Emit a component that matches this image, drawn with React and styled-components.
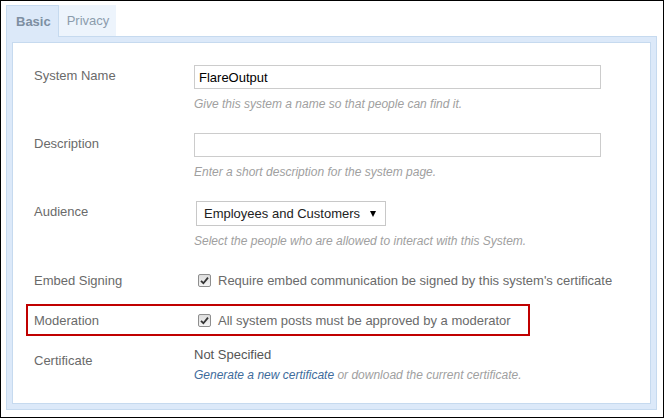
import React from "react";
import styled, { createGlobalStyle } from "styled-components";

const GlobalStyle = createGlobalStyle`
  html, body {
    margin: 0;
    padding: 0;
    background: #fff;
    font-family: "Liberation Sans", Arial, sans-serif;
  }
`;

const Screen = styled.div`
  width: 664px;
  height: 418px;
  box-sizing: border-box;
  border: 1px solid #000;
  background: #fff;
  padding: 4px 6px 7px 5px;
  display: flex;
  flex-direction: column;
`;

const Tabs = styled.div`
  display: flex;
  height: 31px;
`;

const Tab = styled.div`
  position: relative;
  z-index: 1;
  display: flex;
  align-items: center;
  height: ${(p) => (p.$active ? "32px" : "31px")};
  box-sizing: border-box;
  padding: ${(p) => (p.$active ? "0 7px 0 9px" : "0 7px 0 8px")};
  background: ${(p) => (p.$active ? "#dce9f9" : "#edf4fc")};
  border: ${(p) => (p.$active ? "1px solid #c6daef" : "none")};
  border-bottom: none;
  color: ${(p) => (p.$active ? "#7d8fa2" : "#8c9cad")};
  font-size: 13px;
  font-weight: ${(p) => (p.$active ? "bold" : "normal")};
`;

const Frame = styled.div`
  flex: 1;
  border: 1px solid #c6daef;
  background: #dce9f9;
  padding: 5px;
  display: flex;
`;

const Panel = styled.div`
  flex: 1;
  border: 1px solid #c6daef;
  background: #fff;
  padding: 22px 20px 0 21px;
`;

const Row = styled.div`
  display: grid;
  grid-template-columns: 160px 1fr;
  margin-bottom: ${(p) => p.$gap || 0}px;
`;

const HighlightRow = styled(Row)`
  box-sizing: border-box;
  width: 504px;
  margin-left: -8px;
  padding: 5px 0 5px 6px;
  border: 2px solid #c00000;
`;

const Label = styled.div`
  padding-top: ${(p) => p.$top || 0}px;
  font-size: 13px;
  line-height: 16px;
  color: #6a6a6a;
`;

const Field = styled.div`
  display: flex;
  flex-direction: column;
  align-items: flex-start;
`;

const TextInput = styled.input`
  width: 407px;
  height: 24px;
  box-sizing: border-box;
  border: 1px solid #ccc;
  padding: 0 4px;
  margin: 0;
  font-family: "Liberation Sans", Arial, sans-serif;
  font-size: 13px;
  color: #000;
  outline: none;
`;

const Select = styled.div`
  width: 190px;
  height: 25px;
  box-sizing: border-box;
  margin-left: 2px;
  border: 1px solid #c8c8c8;
  padding: 0 9px 0 7px;
  display: flex;
  align-items: center;
  font-size: 13px;
  color: #222;
`;

const Arrow = styled.span`
  margin-left: auto;
  width: 0;
  height: 0;
  border-left: 3.5px solid transparent;
  border-right: 3.5px solid transparent;
  border-top: 6px solid #000;
`;

const Help = styled.div`
  margin-top: ${(p) => p.$top || 8}px;
  font-size: 12px;
  line-height: 14px;
  font-style: italic;
  color: #a0a0a0;
`;

const Link = styled.span`
  color: #3d6b9b;
`;

const CheckLine = styled.div`
  display: flex;
  align-items: center;
  height: 18px;
  font-size: 13px;
  color: #6a6a6a;
`;

const Box = styled.span`
  width: 13px;
  height: 13px;
  box-sizing: border-box;
  margin: 0 7px 0 4px;
  border: 1px solid #8e8e8e;
  border-radius: 2px;
  background: linear-gradient(#dcdcdc, #f4f4f4);
  display: flex;
  align-items: center;
  justify-content: center;
`;

const Value = styled.div`
  font-size: 13px;
  line-height: 16px;
  color: #555;
`;

const Checkbox = () => (
  <Box>
    <svg width="9" height="9" viewBox="0 0 9 9">
      <path d="M1 4.8 L3.4 7.2 L8 1.6" fill="none" stroke="#333" strokeWidth="1.8" />
    </svg>
  </Box>
);

export default function App() {
  return (
    <>
      <GlobalStyle />
      <Screen>
        <Tabs>
          <Tab $active>Basic</Tab>
          <Tab>Privacy</Tab>
        </Tabs>
        <Frame>
          <Panel>
            <Row $gap={22}>
              <Label $top={3}>System Name</Label>
              <Field>
                <TextInput value="FlareOutput" readOnly />
                <Help>Give this system a name so that people can find it.</Help>
              </Field>
            </Row>
            <Row $gap={22}>
              <Label $top={3}>Description</Label>
              <Field>
                <TextInput value="" readOnly />
                <Help>Enter a short description for the system page.</Help>
              </Field>
            </Row>
            <Row $gap={23}>
              <Label $top={3}>Audience</Label>
              <Field>
                <Select>
                  Employees and Customers
                  <Arrow />
                </Select>
                <Help>Select the people who are allowed to interact with this System.</Help>
              </Field>
            </Row>
            <Row $gap={15}>
              <Label $top={2}>Embed Signing</Label>
              <CheckLine>
                <Checkbox />
                Require embed communication be signed by this system's certificate
              </CheckLine>
            </Row>
            <HighlightRow $gap={11}>
              <Label $top={2}>Moderation</Label>
              <CheckLine>
                <Checkbox />
                All system posts must be approved by a moderator
              </CheckLine>
            </HighlightRow>
            <Row>
              <Label $top={6}>Certificate</Label>
              <Field>
                <Value>Not Specified</Value>
                <Help $top={5}>
                  <Link>Generate a new certificate</Link> or download the current certificate.
                </Help>
              </Field>
            </Row>
          </Panel>
        </Frame>
      </Screen>
    </>
  );
}
